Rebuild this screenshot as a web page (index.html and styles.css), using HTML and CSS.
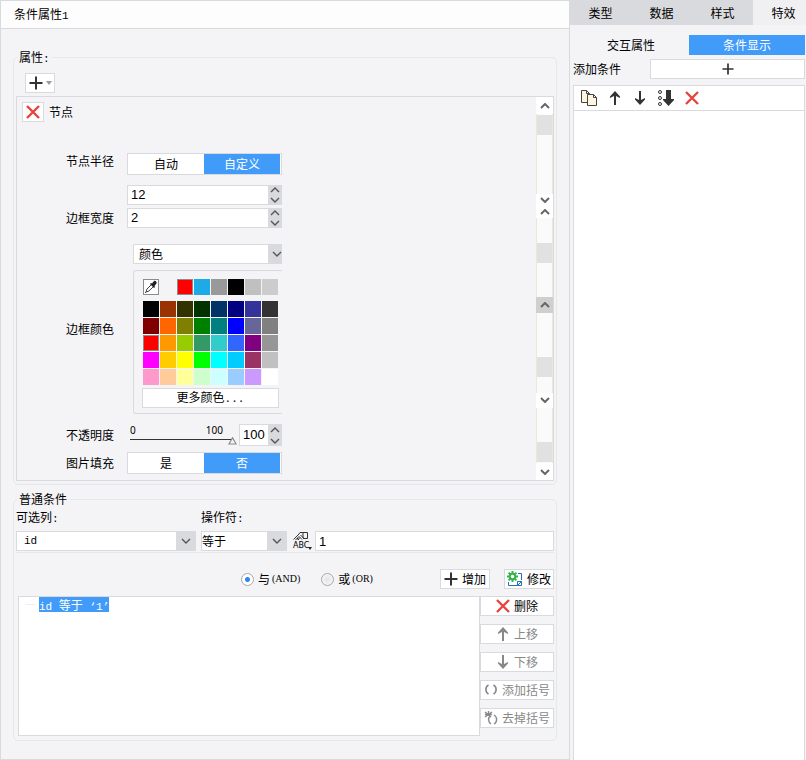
FILE: index.html
```html
<!DOCTYPE html>
<html lang="zh-CN">
  <head>
    <meta charset="UTF-8" />
    <meta name="viewport" content="width=device-width, initial-scale=1.0" />
    <title>条件属性</title>
    <link rel="stylesheet" href="styles.css">
  </head>
  <body>
    <svg class="sprite">
      <symbol id="plus" viewBox="0 0 14 14"><path d="M7 0.5v13M0.5 7h13" stroke="#333" stroke-width="2" /></symbol>
      <symbol id="cross" viewBox="0 0 14 14"><path d="M1 1l12 12M13 1L1 13" stroke="#ea433c" stroke-width="2.4" fill="none" /></symbol>
      <symbol id="up" viewBox="0 0 14 14"><path d="M7 0L12 5.500V7L8 5v9H6V5L2 7V5.500z" fill="currentColor" /></symbol>
      <symbol id="down" viewBox="0 0 14 14"><path d="M7 14L12 8.500V7L8 9V0H6v9L2 7v1.500z" fill="currentColor" /></symbol>
      <symbol id="chevron-up" viewBox="0 0 10 6"><path d="M1 5l4-4 4 4" stroke="currentColor" fill="none" /></symbol>
      <symbol id="chevron-down" viewBox="0 0 10 6"><path d="M1 1l4 4 4-4" stroke="currentColor" fill="none" /></symbol>
    </svg>

    <main class="dialog">
      <h1 class="dialog-title">条件属性<span class="mono">1</span></h1>
      <div class="dialog-body">
        <fieldset class="group">
          <legend>属性<span class="mono">:</span></legend>
          <div class="add-bar">
            <button class="btn add-btn" aria-label="添加属性">
              <svg width="14" height="14"><use href="#plus" /></svg>
              <svg width="6" height="4" viewBox="0 0 6 4"><path d="M0 0h6L3 4z" fill="#999" /></svg>
            </button>
          </div>
          <div class="panel">
            <div class="panel-main">
              <div class="panel-head">
                <button class="btn remove-btn" aria-label="删除节点"><svg width="14" height="14"><use href="#cross" /></svg></button>
                <span>节点</span>
              </div>
              <div class="props">
                <div class="prop prop-top">
                  <span class="prop-label">节点半径</span>
                  <div class="segment">
                    <button>自动</button>
                    <button class="active">自定义</button>
                  </div>
                </div>
                <div class="prop radius-row">
                  <span class="prop-label"></span>
                  <div class="spinner">
                    <input type="text" value="12" aria-label="节点半径">
                    <div class="spin-btns">
                      <button aria-label="增大"><svg width="10" height="6"><use href="#chevron-up" /></svg></button>
                      <button aria-label="减小"><svg width="10" height="6"><use href="#chevron-down" /></svg></button>
                    </div>
                  </div>
                </div>
                <div class="prop width-row">
                  <label class="prop-label" for="border-width">边框宽度</label>
                  <div class="spinner">
                    <input type="text" id="border-width" value="2">
                    <div class="spin-btns">
                      <button aria-label="增大"><svg width="10" height="6"><use href="#chevron-up" /></svg></button>
                      <button aria-label="减小"><svg width="10" height="6"><use href="#chevron-down" /></svg></button>
                    </div>
                  </div>
                </div>
                <div class="prop color-row">
                  <label class="prop-label" for="color-type">边框颜色</label>
                  <div class="color-field">
                    <div class="select color-select">
                      <select id="color-type"><option>颜色</option></select>
                      <span class="select-arrow"><svg width="10" height="6"><use href="#chevron-down" /></svg></span>
                    </div>
                    <div class="color-panel">
                      <div class="swatches recent" id="recent">
                        <button class="picker" aria-label="取色">
                          <svg width="14" height="14" viewBox="0 0 14 14"><path d="M2 12l1-3 5-5 2 2-5 5z" fill="#fff" stroke="#444" /><path d="M1 13l1.500-1.500" stroke="#444" /><path d="M6 4l1-1 1 .5L10 1c1-1 3.500 1 2.500 2.500l-2 2.500.5 1-1 1z" fill="#222" /></svg>
                        </button>
                        <span></span>
                      </div>
                      <div class="swatches" id="palette"></div>
                      <button class="btn more-btn">更多颜色<span class="mono">...</span></button>
                    </div>
                  </div>
                </div>
                <div class="prop opacity-row">
                  <label class="prop-label" for="opacity">不透明度</label>
                  <div class="opacity-field">
                    <div class="slider">
                      <div class="slider-scale"><span>0</span><span>100</span></div>
                      <input type="range" id="opacity" min="0" max="100" value="100">
                    </div>
                    <div class="spinner">
                      <input type="text" value="100" aria-label="不透明度">
                      <div class="spin-btns">
                        <button aria-label="增大"><svg width="10" height="6"><use href="#chevron-up" /></svg></button>
                        <button aria-label="减小"><svg width="10" height="6"><use href="#chevron-down" /></svg></button>
                      </div>
                    </div>
                  </div>
                </div>
                <div class="prop fill-row">
                  <span class="prop-label">图片填充</span>
                  <div class="segment">
                    <button>是</button>
                    <button class="active">否</button>
                  </div>
                </div>
              </div>
            </div>
            <div class="scrollbar">
              <div class="scroll-btn tall"><svg width="10" height="6"><use href="#chevron-up" /></svg></div>
              <div class="track"><div class="thumb"></div></div>
              <div class="scroll-btn short"><svg width="10" height="6"><use href="#chevron-down" /></svg></div>
              <div class="scroll-btn short"><svg width="10" height="6"><use href="#chevron-up" /></svg></div>
              <div class="track"><div class="thumb thumb-upper"></div></div>
              <div class="scroll-btn pressed"><svg width="10" height="6"><use href="#chevron-up" /></svg></div>
              <div class="track"><div class="thumb thumb-lower"></div></div>
              <div class="scroll-btn"><svg width="10" height="6"><use href="#chevron-down" /></svg></div>
              <div class="track track-last"><div class="thumb"></div></div>
              <div class="scroll-btn tall"><svg width="10" height="6"><use href="#chevron-down" /></svg></div>
            </div>
          </div>
        </fieldset>

        <fieldset class="group condition">
          <legend>普通条件</legend>
          <div class="expression">
            <div class="column-field">
              <label for="column">可选列<span class="mono">:</span></label>
              <div class="select column-select">
                <select id="column" class="mono"><option>id</option></select>
                <span class="select-arrow"><svg width="10" height="6"><use href="#chevron-down" /></svg></span>
              </div>
            </div>
            <div class="operator-field">
              <label for="operator">操作符<span class="mono">:</span></label>
              <div class="select operator-select">
                <select id="operator"><option>等于</option></select>
                <span class="select-arrow"><svg width="10" height="6"><use href="#chevron-down" /></svg></span>
              </div>
            </div>
            <button class="type-btn" aria-label="值类型">
              <svg width="16" height="9" viewBox="0 0 16 9"><path d="M.5 7.500L6 2l1-1.500h3M2.500 8L6 4.500M4.500 8L7 5.500M6 4.500l3 3M7.500 3l3 3M4 6l2 2M10 .5v5.500M10 .5h4.500v6H10" fill="none" stroke="#333" /></svg>
              <span>ABC</span>
              <svg class="type-caret" width="4" height="3" viewBox="0 0 4 3"><path d="M0 0h4L2 3z" fill="#222" /></svg>
            </button>
            <input type="text" class="value-input" value="1" aria-label="值">
          </div>
          <div class="logic">
            <label class="and"><input type="radio" name="logic" checked>与<span class="serif">(AND)</span></label>
            <label class="or"><input type="radio" name="logic">或<span class="serif">(OR)</span></label>
            <button class="btn logic-btn"><svg width="14" height="14"><use href="#plus" /></svg>增加</button>
            <button class="btn logic-btn">
              <svg width="16" height="16" viewBox="0 0 16 16"><path d="M1.500 11v3.500h9M11 2.500h3.500V9M10.500 14.500v-4h4v4z" fill="none" stroke="#1f72b5" /><path d="M10.500 14.500l4-4" stroke="#1f72b5" /><circle cx="5.500" cy="5.500" r="2.800" fill="none" stroke="#35b34a" stroke-width="2" /><path d="M5.500 0v2.500M5.500 8.500V11M0 5.500h2.500M8.500 5.500H11M1.600 1.600l1.800 1.800M7.600 7.600l1.800 1.800M9.400 1.600L7.600 3.400M1.600 9.400l1.800-1.800" stroke="#35b34a" stroke-width="2" /></svg>
              修改
            </button>
          </div>
          <div class="rules">
            <div class="rule-list">
              <div class="rule"><span class="rule-text"><span class="mono">id </span>等于<span class="mono"> ‘1’</span></span></div>
            </div>
            <div class="rule-actions">
              <button class="btn"><svg width="14" height="14"><use href="#cross" /></svg>删除</button>
              <button class="btn" disabled><svg width="14" height="14"><use href="#up" /></svg>上移</button>
              <button class="btn" disabled><svg width="14" height="14"><use href="#down" /></svg>下移</button>
              <button class="btn" disabled>
                <svg width="14" height="14" viewBox="0 0 14 14"><path d="M4.500 2C1 4 1 9 4.500 11M9.500 2c3.500 2 3.500 7 0 9" fill="none" stroke="#888" stroke-width="1.600" /></svg>
                添加括号
              </button>
              <button class="btn" disabled>
                <svg width="14" height="14" viewBox="0 0 14 14"><path d="M6 5C4 7 4 11 7 13M10 4c3.500 2 3.500 7 0 9M1 1l6 5M8 1L1 6M4.500 0v5M1 3.500h7" fill="none" stroke="#888" stroke-width="1.400" /></svg>
                去掉括号
              </button>
            </div>
          </div>
        </fieldset>
      </div>
    </main>

    <aside class="side">
      <nav class="tabs">
        <button>类型</button>
        <button>数据</button>
        <button>样式</button>
        <button class="active">特效</button>
      </nav>
      <div class="side-body">
        <div class="sub-tabs">
          <button>交互属性</button>
          <button class="active">条件显示</button>
        </div>
        <div class="add-condition">
          <span>添加条件</span>
          <button class="btn" aria-label="添加条件"><svg width="12" height="12"><use href="#plus" /></svg></button>
        </div>
        <div class="condition-list">
          <div class="toolbar">
            <button aria-label="复制">
              <svg width="16" height="16" viewBox="0 0 16 16"><path d="M.5.500h5l3 3v9h-8zM5.500.500v3h3" fill="#fff6df" stroke="#444" /><path d="M6.500 4.500h6l3 3v8h-9zM12.500 4.500v3h3" fill="#fff6df" stroke="#444" /></svg>
            </button>
            <button aria-label="上移"><svg width="14" height="14"><use href="#up" /></svg></button>
            <button aria-label="下移"><svg width="14" height="14"><use href="#down" /></svg></button>
            <button aria-label="排序">
              <svg width="16" height="16" viewBox="0 0 16 16"><g fill="none" stroke="#333"><circle cx="2" cy="2" r="1.500" /><circle cx="2" cy="8" r="1.500" /><circle cx="2" cy="14" r="1.500" /></g><path d="M8 0h5v9h3v1l-5.500 6L5 10V9h3z" fill="#333" /></svg>
            </button>
            <button aria-label="删除"><svg width="14" height="14"><use href="#cross" /></svg></button>
          </div>
        </div>
      </div>
    </aside>

    <script>
      const RECENT = ["#ff0000", "#1eaae6", "#999999", "#000000", "#c0c0c0", "#cccccc"];
      const PALETTE = [
        "#000000", "#993300", "#333300", "#003300", "#003366", "#000080", "#333399", "#333333",
        "#800000", "#ff6600", "#808000", "#008000", "#008080", "#0000ff", "#666699", "#808080",
        "#ff0000", "#ff9900", "#99cc00", "#339966", "#33cccc", "#3366ff", "#800080", "#969696",
        "#ff00ff", "#ffcc00", "#ffff00", "#00ff00", "#00ffff", "#00ccff", "#993366", "#c0c0c0",
        "#ff99cc", "#ffcc99", "#ffff99", "#ccffcc", "#ccffff", "#99ccff", "#cc99ff", "#ffffff",
      ];

      function addSwatches(id, colors) {
        const box = document.getElementById(id);
        colors.forEach((color) => {
          const swatch = document.createElement("button");
          swatch.className = color === "#ff0000" ? "swatch selected" : "swatch";
          swatch.style.backgroundColor = color;
          swatch.setAttribute("aria-label", color);
          box.appendChild(swatch);
        });
      }

      addSwatches("recent", RECENT);
      addSwatches("palette", PALETTE);
    </script>
  </body>
</html>
```
FILE: styles.css
```css
* {
  box-sizing: border-box;
}

body {
  display: flex;
  min-height: 100vh;
  margin: 0;
  background: #f4f4f7;
  color: #000;
  font: 12px/16px "Noto Sans CJK SC", sans-serif;
}

button,
input,
select {
  margin: 0;
  padding: 0;
  border: 0;
  border-radius: 0;
  background: none;
  color: inherit;
  font: inherit;
}

svg {
  display: block;
  flex: none;
}

.sprite {
  position: absolute;
  width: 0;
  height: 0;
}

.mono {
  font-family: "Liberation Mono", monospace;
  font-size: 11px;
}

.serif {
  margin-left: 2px;
  font-family: "Liberation Serif", serif;
  font-size: 10px;
}

.btn {
  display: flex;
  align-items: center;
  justify-content: center;
  gap: 4px;
  height: 20px;
  border: 1px solid #d9dadd;
  background: #fff;
  white-space: nowrap;
}

.btn:disabled {
  color: #888;
}

/* dialog */

.dialog {
  flex: 1;
  border: 1px solid #d9dadd;
}

.dialog-title {
  height: 28px;
  margin: 0;
  padding: 0 13px;
  border-bottom: 1px solid #d9dadd;
  background: #fdfdfd;
  font-size: 12px;
  font-weight: normal;
  line-height: 26px;
}

.dialog-body {
  padding: 20px 12px 12px;
}

.group {
  min-width: 0;
  margin: 0;
  padding: 0 2px 3px;
  border: 1px solid #e6e7ea;
  border-radius: 5px;
}

.group legend {
  height: 16px;
  margin-left: 1px;
  padding: 0 2px;
}

.add-bar {
  padding: 8px 9px 3px;
}

.add-btn {
  width: 30px;
  gap: 3px;
}

.panel {
  display: flex;
  border: 1px solid #d9dadd;
}

.panel-main {
  flex: 1;
  padding: 5px 5px 6px;
}

.panel-head {
  display: flex;
  align-items: center;
  gap: 5px;
}

.remove-btn {
  width: 22px;
}

.props {
  padding-top: 31px;
}

.prop {
  display: flex;
  align-items: center;
  gap: 13px;
}

.prop-top {
  align-items: flex-start;
}

.prop-label {
  width: 92px;
  text-align: right;
}

.radius-row {
  margin-top: 10px;
}

.width-row {
  margin-top: 3px;
}

.color-row {
  margin-top: 16px;
}

.opacity-row {
  margin-top: 10px;
}

.fill-row {
  margin-top: 6px;
}

.segment {
  display: flex;
  width: 155px;
  height: 22px;
  padding-right: 1px;
  border: 1px solid #d9dadd;
  background: #fff;
}

.segment button {
  flex: 1;
}

.active {
  background: #419bf9;
  color: #fff;
}

.spinner {
  display: flex;
  width: 155px;
  height: 20px;
}

.spinner input {
  flex: 1;
  min-width: 0;
  padding-left: 3px;
  border: 1px solid #d9dadd;
  border-right: 0;
  background: #fff;
  font: 13px/18px "Liberation Sans", sans-serif;
}

.spin-btns {
  display: flex;
  flex-direction: column;
  width: 14px;
  background: #d9dadd;
  color: #555;
}

.spin-btns svg,
.select-arrow svg {
  stroke-width: 1.4;
}

.spin-btns button {
  display: flex;
  flex: 1;
  align-items: center;
  justify-content: center;
}

.select {
  display: flex;
  height: 20px;
}

.select select {
  flex: 1;
  min-width: 0;
  border: 1px solid #d9dadd;
  border-right: 0;
  background: #fff;
  appearance: none;
}

.select-arrow {
  display: flex;
  align-items: center;
  justify-content: center;
  width: 20px;
  background: #d9dadd;
  color: #555;
}

.color-field {
  width: 155px;
  padding-left: 6px;
}

.color-select select {
  padding-left: 5px;
}

.color-select .select-arrow {
  justify-content: flex-end;
  width: 14px;
}

.color-panel {
  margin-top: 6px;
  padding: 8px 3px 5px 8px;
  border: 1px solid #d9dadd;
  border-right: 0;
  border-radius: 3px 0 0 3px;
}

.swatches {
  display: grid;
  grid-template-columns: repeat(8, 16px);
  grid-auto-rows: 16px;
  gap: 1px;
  margin-left: 1px;
}

.recent {
  margin-bottom: 6px;
}

.selected,
.picker {
  border: 1px solid #8c8c8c;
}

.picker {
  background: #fff;
}

.more-btn {
  display: block;
  width: 137px;
  margin-top: 3px;
}

.opacity-field {
  display: flex;
  width: 155px;
}

.slider {
  flex: 1;
  padding: 0 2px 0 3px;
}

.slider-scale {
  display: flex;
  justify-content: space-between;
  height: 12px;
  padding-right: 14px;
  font: 10px/12px "Noto Sans", sans-serif;
}

.slider input {
  display: block;
  width: 107px;
  height: 9px;
  appearance: none;
  background: linear-gradient(#333, #333) 0 3px / 101px 1px no-repeat;
}

.slider input::-webkit-slider-thumb {
  appearance: none;
  width: 9px;
  height: 8px;
  background: #888;
  clip-path: polygon(evenodd, 50% 0, 100% 100%, 0 100%, 50% 0, 50% 30%, 20% 86%, 80% 86%, 50% 30%);
}

.opacity-field .spinner {
  width: 43px;
  height: 22px;
}

/* scrollbars */

.scrollbar {
  display: flex;
  flex-direction: column;
  width: 17px;
}

.scroll-btn {
  display: flex;
  align-items: center;
  justify-content: center;
  height: 15px;
  background: #fff;
  color: #666;
}

.scroll-btn svg {
  stroke-width: 2;
}

.scroll-btn.tall {
  height: 17px;
}

.scroll-btn.short {
  height: 12px;
}

.scroll-btn.pressed {
  height: 16px;
  background: #cfcfcf;
}

.track {
  flex: 80;
  padding-top: 1px;
  border: 1px solid #ede7d8;
  border-width: 0 1px;
  background: #fafafa;
}

.thumb {
  height: 20px;
  background: #e1e1e1;
}

.thumb-upper {
  margin-top: 24px;
}

.thumb-lower {
  margin-top: 43px;
}

.track-last {
  display: flex;
  flex: 54;
  flex-direction: column;
  justify-content: flex-end;
  padding-bottom: 1px;
}

/* condition */

.condition {
  margin-top: 6px;
  padding-bottom: 4px;
}

.expression {
  display: flex;
  align-items: flex-end;
  padding: 2px 0 1px;
  border-bottom: 1px solid #e6e7ea;
}

.expression label {
  display: block;
  height: 22px;
}

.column-field {
  width: 180px;
  margin-right: 5px;
}

.column-select select {
  padding-left: 7px;
}

.operator-field {
  width: 86px;
}

.type-btn {
  position: relative;
  width: 28px;
  height: 20px;
  padding-left: 6px;
  text-align: left;
}

.type-btn span {
  display: block;
  font: 8px/9px "DejaVu Sans", sans-serif;
}

.type-caret {
  position: absolute;
  right: 3px;
  bottom: 1px;
}

.value-input {
  flex: 1;
  min-width: 0;
  height: 20px;
  padding-left: 3px;
  border: 1px solid #d9dadd;
  background: #fff;
  font: 13px/18px "Liberation Sans", sans-serif;
}

.logic {
  display: flex;
  align-items: center;
  padding: 16px 0 7px;
}

.logic label {
  display: flex;
  align-items: center;
}

.logic input {
  width: 13px;
  height: 13px;
  margin-right: 4px;
  border: 1px solid #a8a8a8;
  border-radius: 50%;
  background: radial-gradient(#e4e4e4, #fbfbfb);
  appearance: none;
}

.logic input:checked {
  background: radial-gradient(#2f86ee 2px, #fff 3px);
}

.and {
  margin-left: 225px;
}

.or {
  margin-left: 21px;
}

.logic-btn {
  width: 50px;
}

.or + .logic-btn {
  margin: 0 14px 0 auto;
}

.rules {
  display: flex;
  padding-left: 2px;
}

.rule-list {
  flex: 1;
  height: 140px;
  border: 1px solid #d9dadd;
  background: #fff;
}

.rule {
  display: flex;
  align-items: center;
}

.rule::before {
  width: 10px;
  margin: 0 3px 0 7px;
  border-top: 1px solid #eee;
  content: "";
}

.rule-text {
  height: 15px;
  background: #419bf9;
  color: #fff;
  line-height: 15px;
  white-space: pre;
}

.rule-actions {
  display: flex;
  flex-direction: column;
  gap: 8px;
  width: 74px;
}

/* side panel */

.side {
  display: flex;
  flex-direction: column;
  width: 236px;
}

.tabs {
  display: flex;
  height: 25px;
  overflow: hidden;
  background: #d9dadd;
}

.tabs button {
  flex: none;
  width: 61px;
}

.tabs .active {
  background: #f0f0f3;
  color: #000;
}

.side-body {
  display: flex;
  flex: 1;
  flex-direction: column;
  padding: 10px 1px 0 3px;
}

.sub-tabs {
  display: flex;
  height: 20px;
}

.sub-tabs button {
  flex: 1;
}

.add-condition {
  display: flex;
  align-items: center;
  justify-content: space-between;
  margin: 4px 0 6px;
}

.add-condition .btn {
  width: 155px;
}

.condition-list {
  flex: 1;
  border: 1px solid #d9dadd;
  border-bottom: 0;
  background: #fff;
}

.toolbar {
  display: flex;
  align-items: center;
  gap: 11px;
  height: 25px;
  padding-left: 7px;
  border-bottom: 1px solid #d9dadd;
  color: #333;
}
```
